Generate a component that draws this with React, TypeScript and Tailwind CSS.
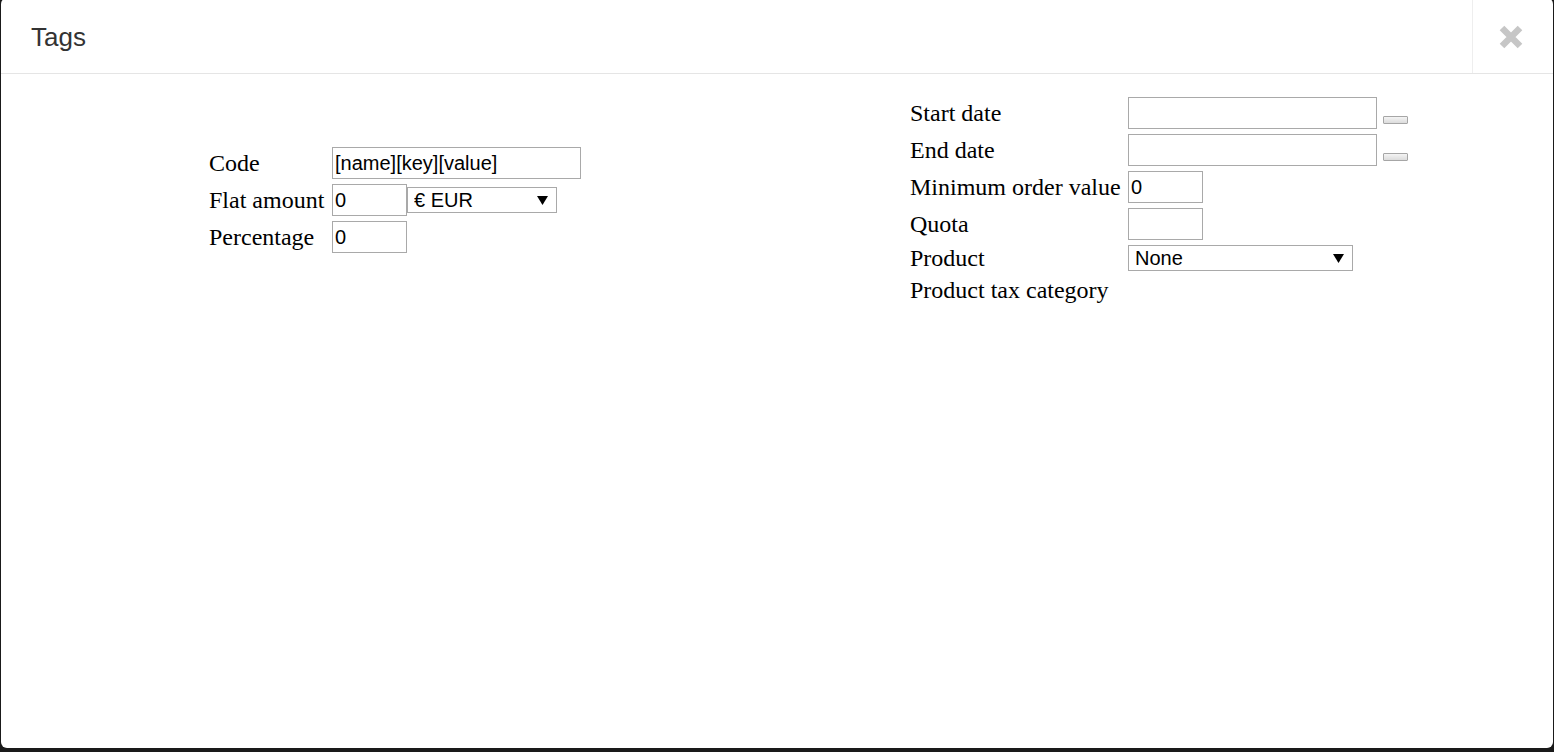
import React from "react"

// Simple form row: label cell + field cell
function Row({
  label,
  labelWidth,
  height = "h-[37px]",
  children,
}: {
  label: string
  labelWidth: string
  height?: string
  children?: React.ReactNode
}) {
  return (
    <div className={`flex items-center ${height}`}>
      <div className={`${labelWidth} shrink-0 whitespace-nowrap`}>{label}</div>
      <div className="flex items-center h-full">{children}</div>
    </div>
  )
}

function TextInput({ width, value = "" }: { width: string; value?: string }) {
  return (
    <input
      type="text"
      defaultValue={value}
      className={`block ${width} h-[32px] border border-[#a9a9a9] bg-white px-[2px] text-[20px] text-black outline-none font-['Liberation_Sans',Arial,sans-serif]`}
    />
  )
}

function Select({ width, value }: { width: string; value: string }) {
  return (
    <div className={`relative ${width} h-[26px]`}>
      <select
        defaultValue={value}
        className="block w-full h-full appearance-none border border-[#a9a9a9] bg-white pl-[6px] text-[20px] leading-[22px] text-black outline-none font-['Liberation_Sans',Arial,sans-serif]"
      >
        <option>{value}</option>
      </select>
      <span className="pointer-events-none absolute right-[9px] top-0 flex h-full items-center">
        <svg width="11" height="10" viewBox="0 0 11 10">
          <path d="M0 1 L11 1 L5.5 10 Z" fill="#000" />
        </svg>
      </span>
    </div>
  )
}

function DateButton() {
  return (
    <button
      type="button"
      className="ml-[6px] self-start mt-[21px] h-[8px] w-[25px] rounded-[1px] border border-[#a6a6a6] bg-gradient-to-b from-[#f4f4f4] to-[#dcdcdc]"
    />
  )
}

export default function App() {
  return (
    <div className="h-[752px] w-full overflow-hidden bg-[#1a1a1a] px-px">
      <div className="h-[750px] rounded-[6px] bg-white -mt-[2px] pt-[2px] flex flex-col">
        {/* header */}
        <div className="flex h-[74px] border-b border-[#e5e5e5]">
          <div className="flex flex-1 items-center pl-[30px] pt-[1px] text-[26px] text-[#333] font-['Liberation_Sans',Arial,sans-serif]">
            Tags
          </div>
          <div className="flex w-[81px] items-center justify-center border-l border-[#eeeeee]">
            <svg width="26" height="26" viewBox="0 0 26 26" className="mr-[5px] mt-[1px]">
              <path d="M4 4 L22 22 M22 4 L4 22" stroke="#c6c6c6" strokeWidth="6.5" strokeLinecap="butt" />
            </svg>
          </div>
        </div>

        {/* body */}
        <div className="flex h-[252px] items-center text-[24px] text-black font-['Liberation_Serif','Times_New_Roman',serif]">
          <div className="ml-[208px] w-[701px] shrink-0">
            <Row label="Code" labelWidth="w-[123px]">
              <TextInput width="w-[249px]" value="[name][key][value]" />
            </Row>
            <Row label="Flat amount" labelWidth="w-[123px]">
              <TextInput width="w-[75px]" value="0" />
              <Select width="w-[150px]" value="€ EUR" />
            </Row>
            <Row label="Percentage" labelWidth="w-[123px]">
              <TextInput width="w-[75px]" value="0" />
            </Row>
          </div>

          <div className="shrink-0">
            <Row label="Start date" labelWidth="w-[218px]">
              <TextInput width="w-[249px]" />
              <DateButton />
            </Row>
            <Row label="End date" labelWidth="w-[218px]">
              <TextInput width="w-[249px]" />
              <DateButton />
            </Row>
            <Row label="Minimum order value" labelWidth="w-[218px]">
              <TextInput width="w-[75px]" value="0" />
            </Row>
            <Row label="Quota" labelWidth="w-[218px]">
              <TextInput width="w-[75px]" />
            </Row>
            <Row label="Product" labelWidth="w-[218px]" height="h-[31px]">
              <Select width="w-[225px]" value="None" />
            </Row>
            <Row label="Product tax category" labelWidth="w-[218px]" height="h-[32px]" />
          </div>
        </div>
      </div>
    </div>
  )
}
